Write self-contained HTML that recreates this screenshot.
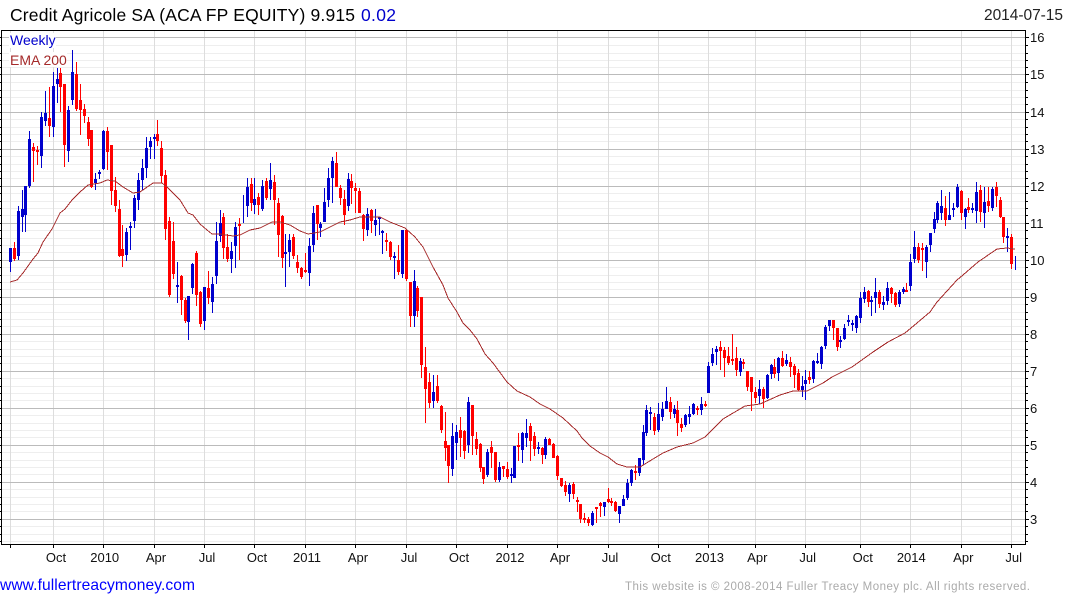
<!DOCTYPE html>
<html><head><meta charset="utf-8"><title>Credit Agricole SA</title>
<style>html,body{margin:0;padding:0;background:#fff}svg{display:block}text{font-family:"Liberation Sans",Arial,sans-serif}</style></head>
<body>
<svg xmlns="http://www.w3.org/2000/svg" width="1075" height="600" viewBox="0 0 1075 600">
<rect width="1075" height="600" fill="#fff"/>
<g shape-rendering="crispEdges" fill="none">
<path stroke="#eeeeee" d="M2 541.5H1025M2 534.5H1025M2 526.5H1025M2 511.5H1025M2 504.5H1025M2 497.5H1025M2 489.5H1025M2 474.5H1025M2 467.5H1025M2 460.5H1025M2 452.5H1025M2 437.5H1025M2 430.5H1025M2 423.5H1025M2 415.5H1025M2 400.5H1025M2 393.5H1025M2 386.5H1025M2 378.5H1025M2 363.5H1025M2 356.5H1025M2 349.5H1025M2 341.5H1025M2 326.5H1025M2 319.5H1025M2 312.5H1025M2 304.5H1025M2 289.5H1025M2 282.5H1025M2 275.5H1025M2 267.5H1025M2 252.5H1025M2 245.5H1025M2 238.5H1025M2 230.5H1025M2 215.5H1025M2 208.5H1025M2 201.5H1025M2 193.5H1025M2 178.5H1025M2 171.5H1025M2 164.5H1025M2 156.5H1025M2 141.5H1025M2 134.5H1025M2 127.5H1025M2 119.5H1025M2 104.5H1025M2 97.5H1025M2 90.5H1025M2 82.5H1025M2 67.5H1025M2 60.5H1025M2 53.5H1025M2 45.5H1025"/>
<path stroke="#dddddd" d="M10.5 31V544M53.5 31V544M103.5 31V544M154.5 31V544M204.5 31V544M254.5 31V544M305.5 31V544M355.5 31V544M406.5 31V544M456.5 31V544M507.5 31V544M557.5 31V544M608.5 31V544M658.5 31V544M708.5 31V544M755.5 31V544M805.5 31V544M860.5 31V544M910.5 31V544M961.5 31V544M1011.5 31V544"/>
<path stroke="#bbbbbb" d="M2 519.5H1025M2 482.5H1025M2 445.5H1025M2 408.5H1025M2 371.5H1025M2 334.5H1025M2 297.5H1025M2 260.5H1025M2 223.5H1025M2 186.5H1025M2 149.5H1025M2 112.5H1025M2 74.5H1025M2 37.5H1025"/>
<rect x="9" y="33" width="47" height="15" fill="#fff"/>
<rect x="9" y="52" width="58" height="15" fill="#fff"/>
<!-- left ticks -->
<path stroke="#000" d="M0 541.5H1M0 534.5H1M0 526.5H1M0 519.5H1M0 511.5H1M0 504.5H1M0 497.5H1M0 489.5H1M0 482.5H1M0 474.5H1M0 467.5H1M0 460.5H1M0 452.5H1M0 445.5H1M0 437.5H1M0 430.5H1M0 423.5H1M0 415.5H1M0 408.5H1M0 400.5H1M0 393.5H1M0 386.5H1M0 378.5H1M0 371.5H1M0 363.5H1M0 356.5H1M0 349.5H1M0 341.5H1M0 334.5H1M0 326.5H1M0 319.5H1M0 312.5H1M0 304.5H1M0 297.5H1M0 289.5H1M0 282.5H1M0 275.5H1M0 267.5H1M0 260.5H1M0 252.5H1M0 245.5H1M0 238.5H1M0 230.5H1M0 223.5H1M0 215.5H1M0 208.5H1M0 201.5H1M0 193.5H1M0 186.5H1M0 178.5H1M0 171.5H1M0 164.5H1M0 156.5H1M0 149.5H1M0 141.5H1M0 134.5H1M0 127.5H1M0 119.5H1M0 112.5H1M0 104.5H1M0 97.5H1M0 90.5H1M0 82.5H1M0 74.5H1M0 67.5H1M0 60.5H1M0 53.5H1M0 45.5H1M0 37.5H1"/>
<!-- right ticks -->
<path stroke="#000" d="M1026 541.5H1028M1026 534.5H1028M1026 526.5H1028M1026 519.5H1029M1026 511.5H1028M1026 504.5H1028M1026 497.5H1028M1026 489.5H1028M1026 482.5H1029M1026 474.5H1028M1026 467.5H1028M1026 460.5H1028M1026 452.5H1028M1026 445.5H1029M1026 437.5H1028M1026 430.5H1028M1026 423.5H1028M1026 415.5H1028M1026 408.5H1029M1026 400.5H1028M1026 393.5H1028M1026 386.5H1028M1026 378.5H1028M1026 371.5H1029M1026 363.5H1028M1026 356.5H1028M1026 349.5H1028M1026 341.5H1028M1026 334.5H1029M1026 326.5H1028M1026 319.5H1028M1026 312.5H1028M1026 304.5H1028M1026 297.5H1029M1026 289.5H1028M1026 282.5H1028M1026 275.5H1028M1026 267.5H1028M1026 260.5H1029M1026 252.5H1028M1026 245.5H1028M1026 238.5H1028M1026 230.5H1028M1026 223.5H1029M1026 215.5H1028M1026 208.5H1028M1026 201.5H1028M1026 193.5H1028M1026 186.5H1029M1026 178.5H1028M1026 171.5H1028M1026 164.5H1028M1026 156.5H1028M1026 149.5H1029M1026 141.5H1028M1026 134.5H1028M1026 127.5H1028M1026 119.5H1028M1026 112.5H1029M1026 104.5H1028M1026 97.5H1028M1026 90.5H1028M1026 82.5H1028M1026 74.5H1029M1026 67.5H1028M1026 60.5H1028M1026 53.5H1028M1026 45.5H1028M1026 37.5H1029"/>
<!-- bottom ticks -->
<path stroke="#000" d="M10.5 545V548M53.5 545V548M103.5 545V548M154.5 545V548M204.5 545V548M254.5 545V548M305.5 545V548M355.5 545V548M406.5 545V548M456.5 545V548M507.5 545V548M557.5 545V548M608.5 545V548M658.5 545V548M708.5 545V548M755.5 545V548M805.5 545V548M860.5 545V548M910.5 545V548M961.5 545V548M1011.5 545V548"/>
<rect x="1.5" y="30.5" width="1024" height="514" stroke="#000"/>

<!-- blue wicks -->
<path stroke="#0000cc" d="M10.5 248V272M18.5 206V260M22.5 190V232M25.5 186V232M29.5 131V188M41.5 112V168M45.5 91V126M53.5 72V137M57.5 68V103M68.5 106V162M72.5 50V105M95.5 173V190M99.5 170V179M103.5 130V170M126.5 228V261M130.5 222V250M134.5 195V228M138.5 173V210M142.5 159V190M146.5 137V178M150.5 137V159M154.5 134V159M177.5 262V303M188.5 296V340M192.5 263V294M204.5 287V330M212.5 277V313M216.5 222V284M220.5 210V242M231.5 242V273M235.5 222V268M243.5 195V223M247.5 178V217M254.5 178V214M262.5 180V211M270.5 163V200M285.5 234V287M289.5 234V267M309.5 238V286M313.5 206V252M320.5 222V237M324.5 188V222M328.5 168V207M332.5 157V203M348.5 173V211M367.5 208V236M375.5 209V236M379.5 217V235M382.5 230V254M394.5 252V279M402.5 230V278M414.5 270V327M433.5 375V408M452.5 423V476M456.5 425V460M468.5 397V453M487.5 449V477M499.5 462V482M511.5 468V483M514.5 446V478M522.5 432V463M526.5 419V447M538.5 442V454M545.5 437V459M569.5 483V502M592.5 511V526M604.5 502V516M619.5 506V523M623.5 495V506M627.5 479V500M631.5 469V486M639.5 458V476M643.5 425V465M646.5 405V436M650.5 407V430M658.5 403V432M662.5 402V421M666.5 387V409M674.5 405V418M685.5 414V427M689.5 406V424M693.5 403V415M701.5 397V415M708.5 362V393M712.5 348V366M716.5 346V365M740.5 358V376M759.5 380V404M767.5 374V399M771.5 364V379M778.5 357V381M786.5 354V366M802.5 376V397M805.5 370V400M813.5 360V383M817.5 353V364M821.5 346V369M825.5 325V349M829.5 320V331M840.5 336V348M844.5 324V340M848.5 315V326M852.5 320V331M856.5 315V333M860.5 292V323M864.5 287V303M871.5 296V316M875.5 278V313M883.5 296V310M887.5 282V305M899.5 290V307M903.5 287V294M910.5 254V291M914.5 231V263M926.5 245V278M930.5 233V252M934.5 212V233M937.5 201V223M941.5 190V220M949.5 192V220M953.5 203V217M957.5 184V208M965.5 208V229M972.5 203V213M976.5 182V223M984.5 187V228M992.5 187V211M1007.5 228V252M1015.5 256V270"/>
<!-- blue bodies -->
<path stroke="#0000cc" stroke-width="3" d="M10.5 248V262M18.5 211V256M22.5 209V217M25.5 186V215M29.5 139V186M41.5 117V156M45.5 113V121M53.5 86V127M57.5 79V84M68.5 110V151M72.5 72V100M95.5 179V183M99.5 172V174M103.5 131V169M126.5 232V255M130.5 226V228M134.5 198V221M138.5 180V200M142.5 168V180M146.5 148V168M150.5 141V147M154.5 137V139M177.5 285V287M188.5 296V322M192.5 264V288M204.5 287V321M212.5 284V302M216.5 241V276M220.5 223V236M231.5 251V259M235.5 227V246M247.5 187V206M254.5 199V205M262.5 186V209M270.5 180V189M285.5 252V254M289.5 240V252M309.5 246V273M313.5 213V245M320.5 224V228M324.5 202V222M328.5 178V200M332.5 161V178M348.5 179V206M367.5 214V230M375.5 220V225M379.5 217V219M382.5 231V233M394.5 256V258M402.5 230V274M414.5 281V316M433.5 392V401M452.5 436V469M456.5 432V443M468.5 402V445M487.5 452V475M499.5 467V480M511.5 474V476M514.5 446V478M522.5 433V450M526.5 433V438M538.5 447V449M545.5 439V455M569.5 485V494M592.5 513V525M604.5 502V507M619.5 506V514M623.5 499V506M627.5 483V498M631.5 470V483M639.5 458V473M643.5 432V460M646.5 410V433M650.5 412V414M658.5 414V430M662.5 409V417M666.5 401V409M674.5 409V414M685.5 415V425M689.5 414V417M693.5 404V414M701.5 404V410M708.5 366V393M712.5 354V363M716.5 349V352M740.5 361V372M759.5 389V396M767.5 375V398M771.5 365V374M778.5 358V373M786.5 360V364M802.5 386V390M805.5 380V384M813.5 361V379M817.5 361V363M821.5 347V364M825.5 327V346M829.5 320V326M840.5 340V342M844.5 328V339M848.5 320V322M852.5 323V325M856.5 316V328M860.5 298V318M864.5 292V299M871.5 300V302M875.5 292V298M883.5 302V305M887.5 288V301M899.5 292V304M903.5 289V292M910.5 262V286M914.5 247V259M926.5 247V262M930.5 233V245M934.5 219V229M937.5 203V220M941.5 206V213M949.5 215V220M953.5 208V210M957.5 187V207M965.5 209V217M972.5 208V210M976.5 192V211M984.5 202V213M992.5 189V208M1007.5 236V238"/>
<!-- red wicks -->
<path stroke="#ff0000" d="M14.5 242V261M33.5 143V182M37.5 146V165M49.5 87V137M60.5 68V112M64.5 84V167M76.5 62V111M80.5 84V135M84.5 104V123M88.5 117V146M91.5 130V188M107.5 127V170M111.5 145V205M115.5 177V212M119.5 200V257M122.5 225V267M157.5 120V146M161.5 141V183M165.5 170V240M169.5 217V297M173.5 222V279M181.5 275V315M185.5 298V323M196.5 251V306M200.5 291V327M208.5 271V304M223.5 213V259M227.5 234V262M239.5 218V260M251.5 178V211M258.5 193V215M266.5 178V200M274.5 175V225M278.5 198V257M282.5 215V268M293.5 234V259M297.5 255V273M301.5 267V279M305.5 253V273M317.5 205V240M336.5 152V187M340.5 185V205M344.5 190V225M351.5 174V204M355.5 183V213M359.5 188V213M363.5 214V241M371.5 209V233M386.5 233V251M390.5 241V260M398.5 245V275M406.5 229V281M410.5 282V327M417.5 286V317M421.5 297V378M425.5 347V423M429.5 373V408M437.5 375V403M441.5 405V433M445.5 412V461M448.5 445V483M460.5 417V457M464.5 430V459M472.5 405V455M476.5 432V455M480.5 443V472M483.5 467V484M491.5 441V468M495.5 452V482M503.5 466V477M507.5 462V479M518.5 433V461M530.5 423V461M534.5 432V456M542.5 447V464M549.5 438V445M553.5 443V458M557.5 455V480M561.5 478V487M565.5 481V496M573.5 482V499M577.5 497V512M580.5 504V523M584.5 513V523M588.5 517V526M596.5 507V523M600.5 502V517M608.5 488V503M611.5 498V506M615.5 501V512M635.5 465V480M654.5 413V435M670.5 397V419M677.5 401V436M681.5 418V432M697.5 406V415M705.5 401V407M720.5 341V370M724.5 347V377M728.5 347V365M732.5 334V365M736.5 347V376M743.5 359V369M747.5 371V391M751.5 377V411M755.5 387V403M763.5 387V408M774.5 359V378M782.5 351V367M790.5 357V377M794.5 364V388M798.5 369V391M809.5 371V384M833.5 320V340M837.5 328V351M868.5 290V307M879.5 290V308M891.5 287V303M895.5 292V307M906.5 283V292M918.5 243V263M922.5 243V271M945.5 196V226M961.5 190V220M968.5 198V213M980.5 185V222M988.5 187V212M996.5 182V207M1000.5 197V218M1003.5 217V243M1011.5 234V269"/>
<!-- red bodies -->
<path stroke="#ff0000" stroke-width="3" d="M14.5 248V259M33.5 147V151M37.5 150V152M49.5 118V126M60.5 73V87M64.5 84V145M76.5 74V109M80.5 100V110M84.5 109V116M88.5 122V139M91.5 130V187M107.5 131V152M111.5 145V191M115.5 190V206M119.5 209V256M122.5 249V256M157.5 134V141M161.5 148V176M165.5 175V229M169.5 221V295M173.5 241V274M181.5 276V300M185.5 300V321M196.5 253V295M200.5 292V324M208.5 288V298M223.5 217V248M227.5 247V259M239.5 224V226M251.5 184V203M258.5 197V205M266.5 181V198M274.5 182V200M278.5 203V235M282.5 216V258M293.5 237V256M297.5 262V268M301.5 268V277M305.5 270V272M317.5 205V224M336.5 163V187M340.5 188V198M344.5 199V215M351.5 181V188M355.5 188V191M359.5 191V213M363.5 215V229M371.5 210V221M386.5 240V242M390.5 242V257M398.5 260V272M406.5 230V279M410.5 282V316M417.5 288V311M421.5 297V365M425.5 367V389M429.5 382V403M437.5 386V401M441.5 406V430M445.5 441V448M448.5 445V466M460.5 430V438M464.5 431V451M472.5 405V436M476.5 439V449M480.5 444V468M483.5 467V479M491.5 447V453M495.5 452V480M503.5 466V469M507.5 469V477M518.5 445V447M530.5 426V441M534.5 436V449M542.5 448V455M549.5 439V445M553.5 444V458M557.5 456V476M561.5 478V486M565.5 485V492M573.5 484V494M577.5 500V502M580.5 504V519M584.5 518V520M588.5 519V523M596.5 507V509M600.5 503V506M608.5 499V502M611.5 501V503M615.5 502V511M635.5 471V473M654.5 417V431M670.5 402V412M677.5 410V423M681.5 424V428M697.5 408V410M705.5 404V406M720.5 347V351M724.5 350V358M728.5 356V363M732.5 359V361M736.5 358V370M743.5 362V364M747.5 371V387M751.5 377V392M755.5 392V398M763.5 389V399M774.5 367V374M782.5 358V366M790.5 362V367M794.5 366V375M798.5 373V390M809.5 377V380M833.5 320V328M837.5 328V347M868.5 291V302M879.5 292V304M891.5 288V294M895.5 293V305M906.5 290V292M918.5 247V260M922.5 248V250M945.5 208V220M961.5 191V213M968.5 207V210M980.5 190V212M988.5 201V206M996.5 187V196M1000.5 200V217M1003.5 217V237M1011.5 237V264"/>
<!-- EMA 200 -->
<polyline stroke="#a52a2a" points="10,282 17,280 23,273 33,259 38,253 43,242 52,229 60,213 65,209 72,200 80,192 88,185 100,183 107,180 115,181 123,187 133,193 140,192 153,183 162,183 167,187 173,193 180,200 188,213 193,215 200,224 207,230 212,234 220,234 233,236 240,235 250,230 260,228 272,222 280,222 290,225 300,231 308,234 320,232 328,228 340,222 350,220 360,217 380,217 390,222 405,228 415,237 423,247 433,267 443,285 448,298 457,312 463,323 470,330 477,339 485,354 493,363 507,382 517,391 530,397 540,404 550,409 563,418 577,431 582,438 590,446 600,453 608,457 617,464 627,467 640,467 653,459 663,453 677,447 693,443 705,437 720,422 723,419 745,406 760,404 780,395 793,391 807,391 823,383 832,377 852,367 873,352 888,342 905,333 917,323 930,312 937,302 957,280 963,275 978,262 997,249 1007,248 1015,249"/>
</g>
<text x="10" y="21" font-size="17.5" fill="#000" textLength="345">Credit Agricole SA (ACA FP EQUITY) 9.915</text>
<text x="361" y="21" font-size="17.5" fill="#0000cc" textLength="35">0.02</text>
<text x="984" y="20" font-size="15.5" fill="#222" textLength="79">2014-07-15</text>
<text x="10" y="45" font-size="14" fill="#0000cc">Weekly</text>
<text x="10" y="65" font-size="14" fill="#a52a2a">EMA 200</text>
<g font-size="13" fill="#111">
<text x="1030" y="42">16</text><text x="1030" y="79">15</text><text x="1030" y="117">14</text><text x="1030" y="154">13</text><text x="1030" y="191">12</text><text x="1030" y="228">11</text><text x="1030" y="265">10</text>
<text x="1030" y="302">9</text><text x="1030" y="339">8</text><text x="1030" y="376">7</text><text x="1030" y="413">6</text><text x="1030" y="450">5</text><text x="1030" y="487">4</text><text x="1030" y="524">3</text>
</g>
<g font-size="13" fill="#111" text-anchor="middle">
<text x="56" y="562">Oct</text><text x="104.7" y="562">2010</text><text x="156" y="562">Apr</text><text x="207" y="562">Jul</text><text x="257" y="562">Oct</text><text x="307" y="562">2011</text><text x="358" y="562">Apr</text><text x="409" y="562">Jul</text><text x="459" y="562">Oct</text><text x="510" y="562">2012</text><text x="560" y="562">Apr</text><text x="610" y="562">Jul</text><text x="660.7" y="562">Oct</text><text x="709.5" y="562">2013</text><text x="757.3" y="562">Apr</text><text x="807.7" y="562">Jul</text><text x="862.7" y="562">Oct</text><text x="911.3" y="562">2014</text><text x="963.3" y="562">Apr</text><text x="1013.7" y="562">Jul</text>
</g>
<text x="0" y="590" font-size="15.6" fill="#0000ff" textLength="195">www.fullertreacymoney.com</text>
<text x="625" y="590" font-size="11.5" fill="#aaaaaa" textLength="405">This website is © 2008-2014 Fuller Treacy Money plc. All rights reserved.</text>
</svg>
</body></html>
